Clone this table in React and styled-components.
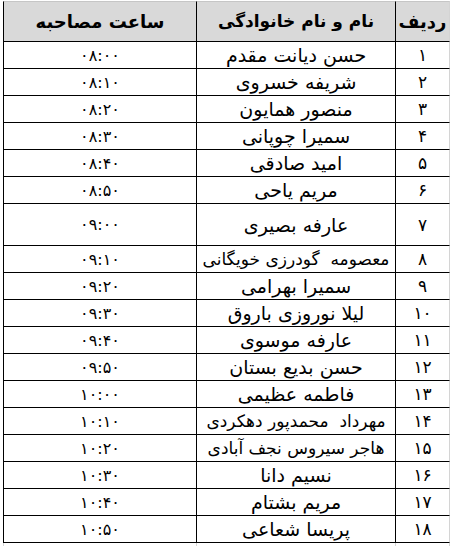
import React from 'react';
import styled, { createGlobalStyle } from 'styled-components';

const GlobalStyle = createGlobalStyle`
  html, body {
    margin: 0;
    padding: 0;
    background: #fff;
  }
  body {
    font-family: "DejaVu Sans", "Noto Sans", sans-serif;
    color: #000;
  }
`;

const Page = styled.div`
  padding: 1px 0 0 3px;
`;

const Sheet = styled.div`
  direction: rtl;
  display: grid;
  grid-template-columns: 55px 199px 193px;
  width: 447px;
`;

const sizes = { num: 17, name: 19, time: 16 };

const Cell = styled.div`
  box-sizing: border-box;
  height: ${p => (p.$tall ? 42 : 27)}px;
  border-left: 1px solid #000;
  border-bottom: 1px solid #000;
  border-right: ${p => (p.$edge ? '1px solid #d4d4d4' : 'none')};
  display: flex;
  align-items: center;
  justify-content: center;
  padding-top: 1px;
  line-height: 1;
  font-size: ${p => (p.$long ? 17 : sizes[p.$kind])}px;
  white-space: pre;
  direction: ${p => (p.$kind === 'time' ? 'ltr' : 'rtl')};
`;

const HeadCell = styled(Cell)`
  height: 41px;
  background: #d9d9d9;
  border-top: 1px solid #c6c6c6;
  font-weight: bold;
  font-size: ${p => (p.$kind === 'name' ? 17 : 18)}px;
  padding-top: 0;
`;

const Tail = styled.div`
  box-sizing: border-box;
  height: 4px;
  border-left: 1px solid #d4d4d4;
  border-right: ${p => (p.$edge ? '1px solid #d4d4d4' : 'none')};
`;

const rows = [
  ['۱', 'حسن دیانت مقدم', '۰۸:۰۰'],
  ['۲', 'شریفه خسروی', '۰۸:۱۰'],
  ['۳', 'منصور همایون', '۰۸:۲۰'],
  ['۴', 'سمیرا چوپانی', '۰۸:۳۰'],
  ['۵', 'امید صادقی', '۰۸:۴۰'],
  ['۶', 'مریم یاحی', '۰۸:۵۰'],
  ['۷', 'عارفه بصیری', '۰۹:۰۰', true],
  ['۸', 'معصومه  گودرزی خویگانی', '۰۹:۱۰'],
  ['۹', 'سمیرا بهرامی', '۰۹:۲۰'],
  ['۱۰', 'لیلا نوروزی باروق', '۰۹:۳۰'],
  ['۱۱', 'عارفه موسوی', '۰۹:۴۰'],
  ['۱۲', 'حسن بدیع بستان', '۰۹:۵۰'],
  ['۱۳', 'فاطمه عظیمی', '۱۰:۰۰'],
  ['۱۴', 'مهرداد  محمدپور دهکردی', '۱۰:۱۰'],
  ['۱۵', 'هاجر سیروس نجف آبادی', '۱۰:۲۰'],
  ['۱۶', 'نسیم دانا', '۱۰:۳۰'],
  ['۱۷', 'مریم بشتام', '۱۰:۴۰'],
  ['۱۸', 'پریسا شعاعی', '۱۰:۵۰'],
];

export default function App() {
  return (
    <Page>
      <GlobalStyle />
      <Sheet>
        <HeadCell $kind="num" $edge>ردیف</HeadCell>
        <HeadCell $kind="name">نام و نام خانوادگی</HeadCell>
        <HeadCell $kind="time">ساعت مصاحبه</HeadCell>
        {rows.map(([num, name, time, tall]) => (
          <React.Fragment key={num}>
            <Cell $kind="num" $edge $tall={tall}>{num}</Cell>
            <Cell $kind="name" $tall={tall} $long={name.length > 18}>{name}</Cell>
            <Cell $kind="time" $tall={tall}>{time}</Cell>
          </React.Fragment>
        ))}
        <Tail $edge />
        <Tail />
        <Tail />
      </Sheet>
    </Page>
  );
}
